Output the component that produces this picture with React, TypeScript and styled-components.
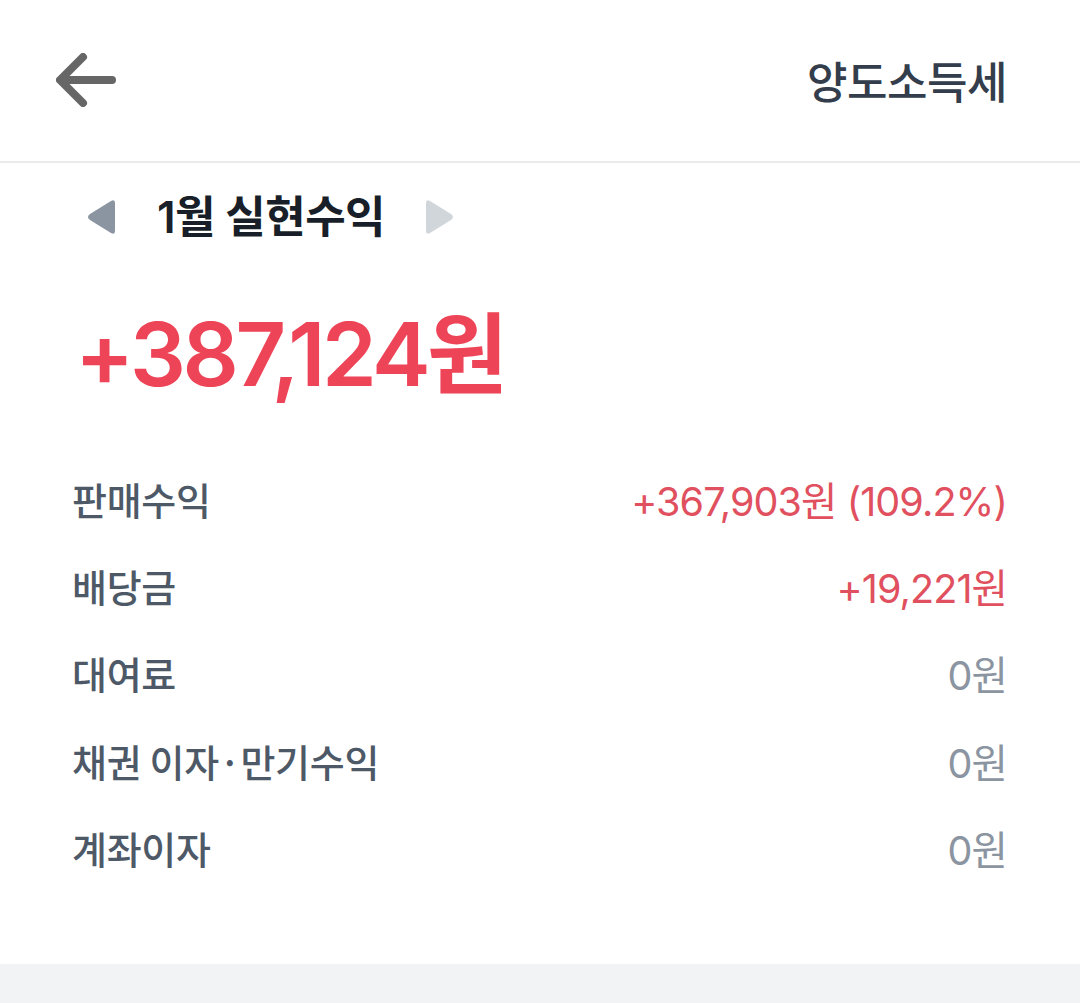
import styled, { createGlobalStyle } from "styled-components";

const GlobalStyle = createGlobalStyle`
  html, body {
    margin: 0;
    padding: 0;
    background: #ffffff;
  }
  body {
    font-family: "Inter", "Noto Sans CJK KR", "Noto Sans", sans-serif;
    -webkit-font-smoothing: antialiased;
  }
`;

type Tone = "red" | "gray";

interface IncomeRow {
  label: string;
  value: string;
  tone: Tone;
}

const rows: IncomeRow[] = [
  { label: "판매수익", value: "+367,903원 (109.2%)", tone: "red" },
  { label: "배당금", value: "+19,221원", tone: "red" },
  { label: "대여료", value: "0원", tone: "gray" },
  { label: "채권 이자·만기수익", value: "0원", tone: "gray" },
  { label: "계좌이자", value: "0원", tone: "gray" },
];

const Page = styled.div`
  width: 1080px;
  min-height: 1003px;
  display: flex;
  flex-direction: column;
  background: #f2f3f5;
`;

const Header = styled.header`
  height: 161px;
  display: flex;
  align-items: center;
  justify-content: space-between;
  padding: 0 73px 0 56px;
  background: #fff;
  border-bottom: 2px solid #ebebeb;
  box-sizing: content-box;
`;

const BackButton = styled.button`
  border: 0;
  background: none;
  padding: 0;
  margin-top: -2px;
  display: flex;
  cursor: pointer;
`;

const Title = styled.h1`
  margin: 0;
  font-size: 44px;
  font-weight: 500;
  color: #333d4b;
  letter-spacing: -0.5px;
  margin-top: -2px;
`;

const Card = styled.section`
  background: #fff;
  padding: 31px 73px 73px 72px;
`;

const MonthNav = styled.div`
  display: flex;
  align-items: center;
  height: 46px;
  padding-left: 14px;
`;

const NavArrow = styled.button<{ $active: boolean }>`
  border: 0;
  background: none;
  padding: 0;
  display: flex;
  color: ${(p) => (p.$active ? "#8b95a1" : "#d1d6db")};
`;

const MonthLabel = styled.span`
  font-size: 44px;
  font-weight: 600;
  color: #191f28;
  letter-spacing: -0.6px;
  margin: 0 38px 0 39px;
  line-height: 1;
`;

const Total = styled.div`
  margin-top: 62px;
  margin-bottom: -8px;
  font-size: 88px;
  font-weight: 600;
  color: #ee4458;
  letter-spacing: -3.5px;
  line-height: 1.2;
  margin-left: 3px;
`;

const List = styled.ul`
  list-style: none;
  margin: 55px 0 0;
  padding: 0;
`;

const Row = styled.li`
  display: flex;
  align-items: center;
  justify-content: space-between;
  height: 87.3px;
`;

const Label = styled.span`
  font-family: "Noto Sans CJK KR", sans-serif;
  font-size: 38px;
  font-weight: 500;
  color: #4e5968;
  letter-spacing: -0.3px;
`;

const Value = styled.span<{ $tone: Tone }>`
  font-size: 39.5px;
  font-weight: 400;
  letter-spacing: -0.9px;
  color: ${(p) => (p.$tone === "red" ? "#e0505e" : "#8b95a1")};
`;

const Triangle = ({ dir }: { dir: "left" | "right" }) => (
  <svg width="32" height="36" viewBox="0 0 32 36">
    {dir === "left" ? (
      <path
        d="M29 4 L29 32 Q29 36 25 34 L4 21 Q0 18 4 15 L25 2 Q29 0 29 4 Z"
        fill="currentColor"
      />
    ) : (
      <path
        d="M3 4 L3 32 Q3 36 7 34 L28 21 Q32 18 28 15 L7 2 Q3 0 3 4 Z"
        fill="currentColor"
      />
    )}
  </svg>
);

const BackIcon = () => (
  <svg width="60" height="54" viewBox="0 0 60 54" fill="none">
    <path
      d="M56 27 H5 M27 4 L4 27 L27 50"
      stroke="#666"
      strokeWidth="8"
      strokeLinecap="round"
      strokeLinejoin="round"
    />
  </svg>
);

const App = () => {
  return (
    <Page>
      <GlobalStyle />
      <Header>
        <BackButton aria-label="back">
          <BackIcon />
        </BackButton>
        <Title>양도소득세</Title>
      </Header>
      <Card>
        <MonthNav>
          <NavArrow $active aria-label="previous month">
            <Triangle dir="left" />
          </NavArrow>
          <MonthLabel>1월 실현수익</MonthLabel>
          <NavArrow $active={false} aria-label="next month">
            <Triangle dir="right" />
          </NavArrow>
        </MonthNav>
        <Total>+387,124원</Total>
        <List>
          {rows.map((row) => (
            <Row key={row.label}>
              <Label>{row.label}</Label>
              <Value $tone={row.tone}>{row.value}</Value>
            </Row>
          ))}
        </List>
      </Card>
    </Page>
  );
};

export default App;
